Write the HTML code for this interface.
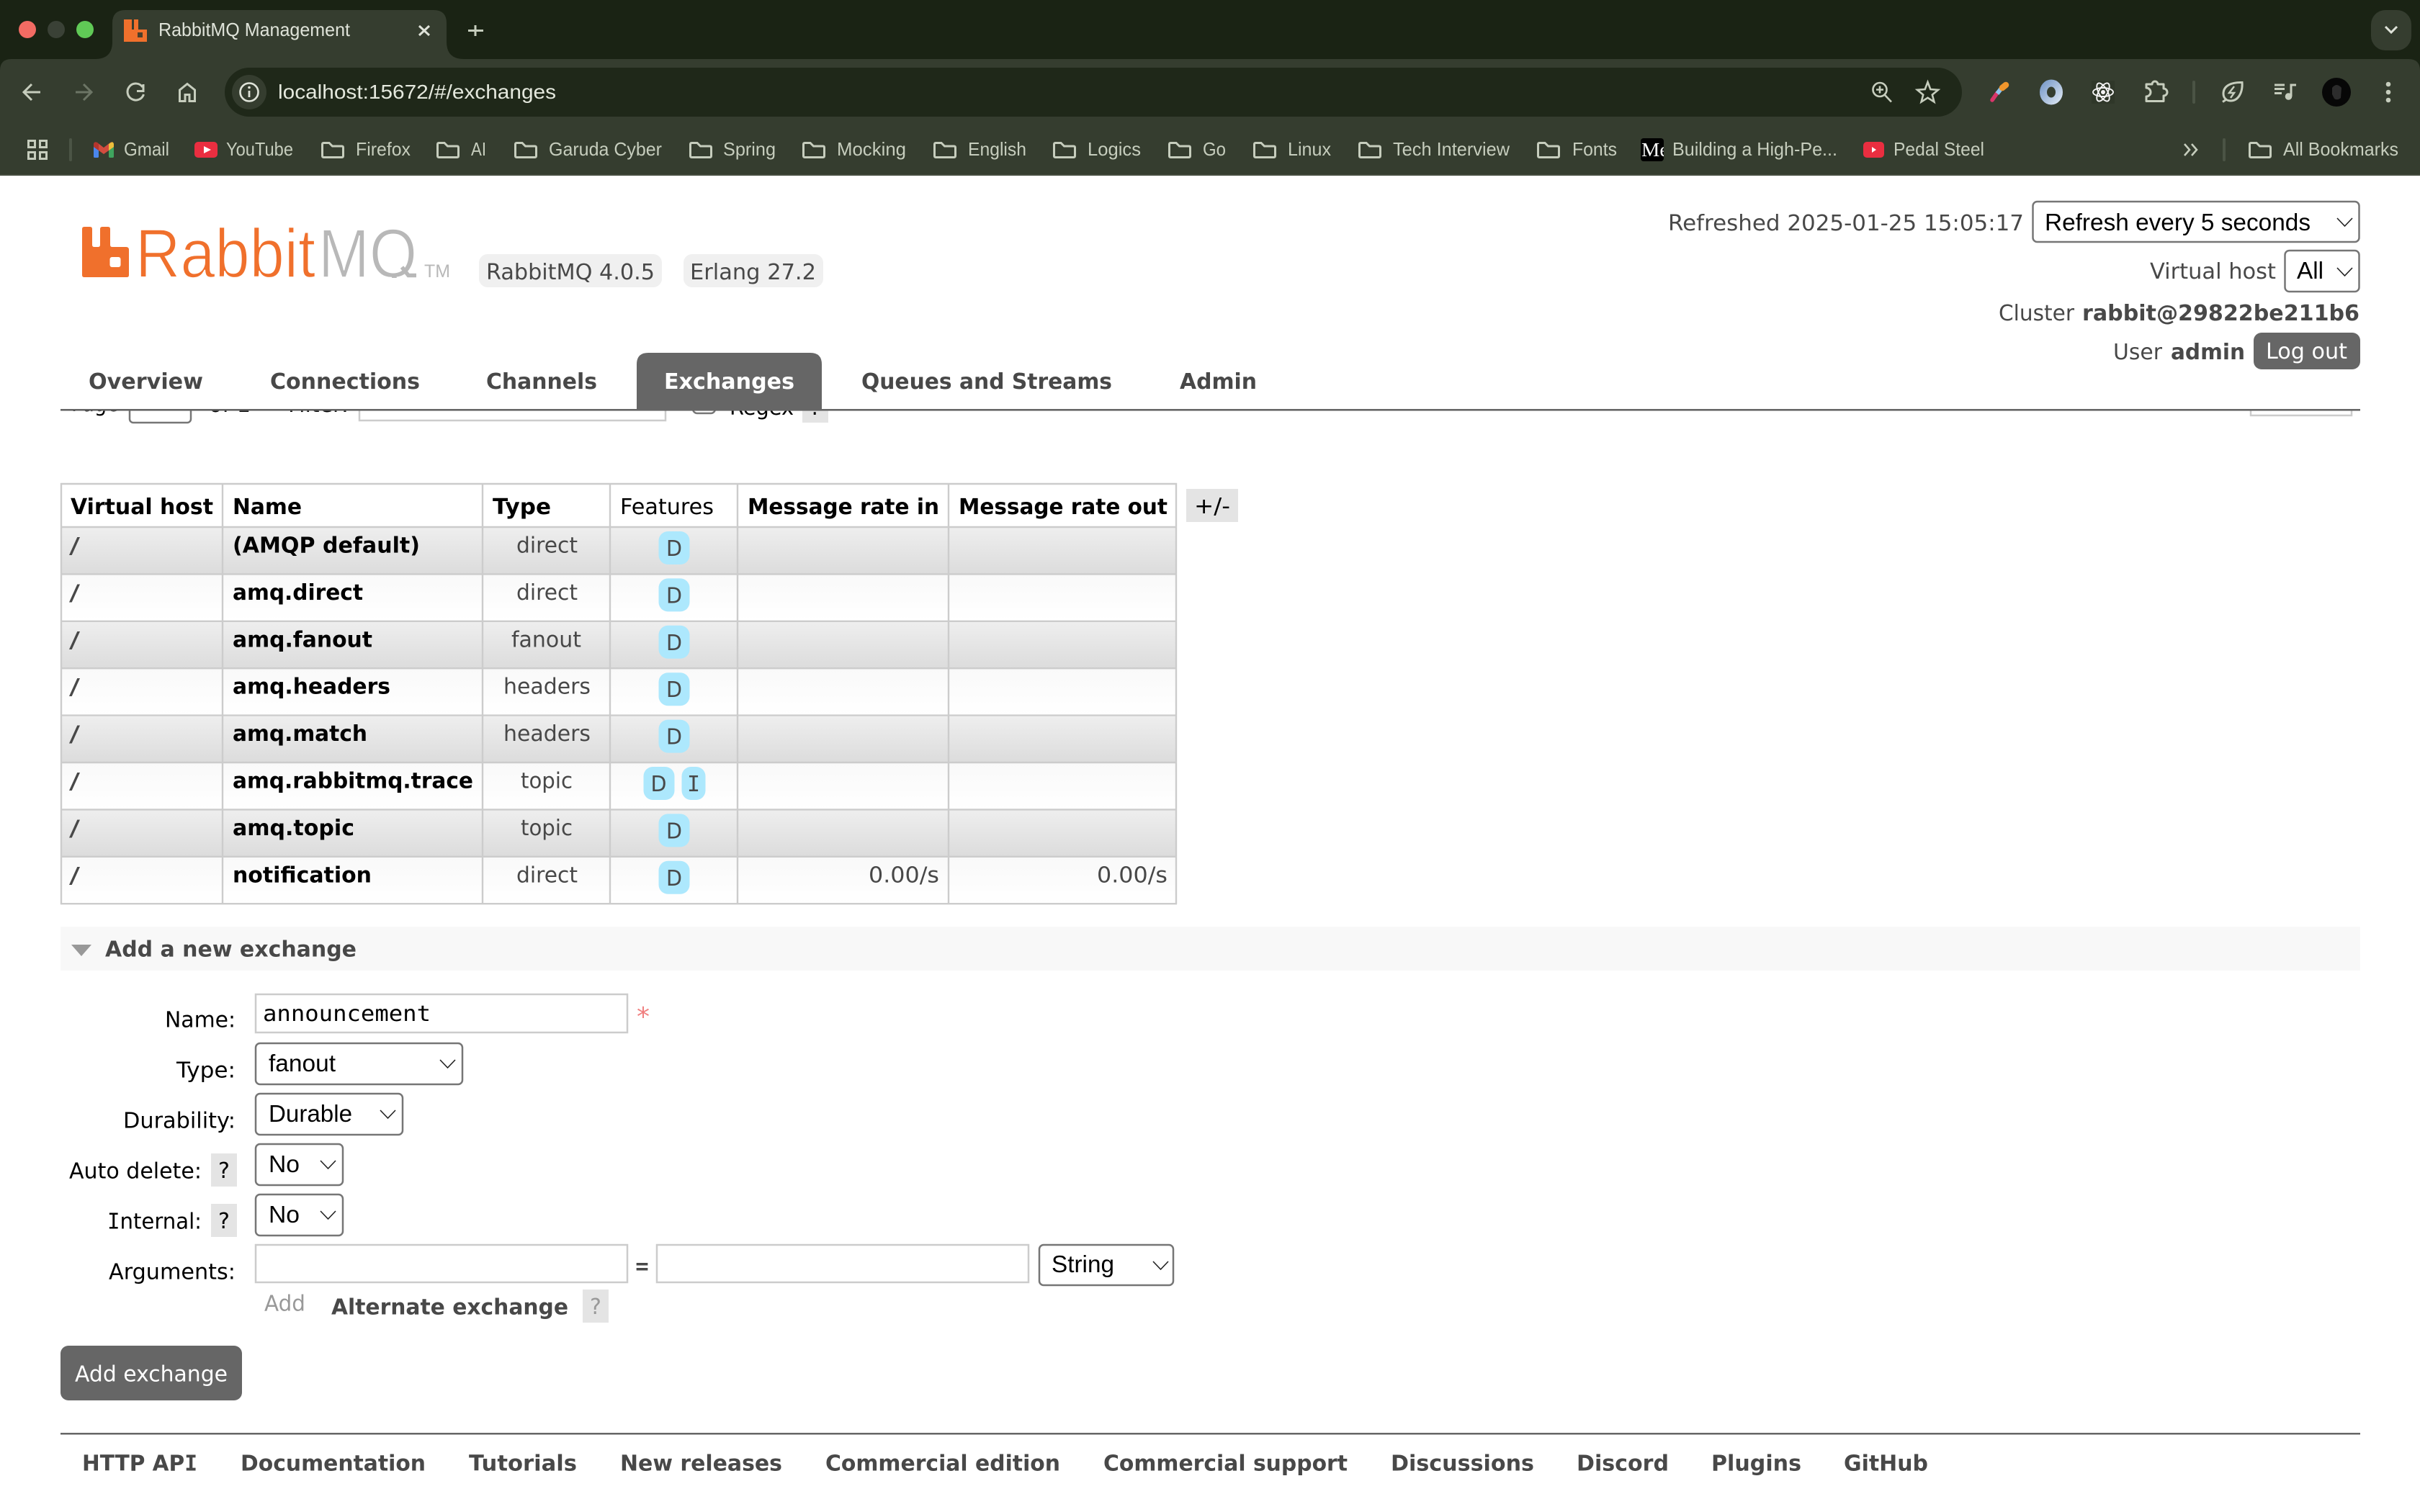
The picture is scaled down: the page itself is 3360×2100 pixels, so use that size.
<!DOCTYPE html>
<html lang="en"><head><meta charset="utf-8"><title>RabbitMQ Management</title>
<style>
html,body{margin:0;padding:0;background:#fff;width:3360px;height:2100px;overflow:hidden}
svg{display:block}
text{white-space:pre}
.d{font-family:"DejaVu Sans",sans-serif;font-size:30px;fill:#484848}
.b{font-weight:700}
.k{fill:#000}
.w{fill:#fff}
.m{font-family:"DejaVu Sans Mono",monospace}
.l{font-family:"Liberation Sans",sans-serif;font-size:33px;fill:#000}
.t{font-family:"Liberation Sans",sans-serif;font-size:26px;fill:#c6cdbd}
.i{fill:none;stroke:#c6cdbd;stroke-width:3}
.sel{fill:#fff;stroke:#767676;stroke-width:2.5}
.inp{fill:#fff;stroke:#ccc;stroke-width:2.5}
.ch{fill:none;stroke:#222;stroke-width:1.6}
.q{fill:#e4e4e4}
.bd{fill:#ade8fd}
.tl{stroke:#ccc;stroke-width:2.4}
</style></head><body>
<svg xmlns="http://www.w3.org/2000/svg" width="3360" height="2100" viewBox="0 0 3360 2100">
<defs>
<linearGradient id="g1" x1="0" y1="0" x2="0" y2="1"><stop offset="0" stop-color="#eeeeee"/><stop offset="1" stop-color="#dcdcdc"/></linearGradient>
<linearGradient id="g2" x1="0" y1="0" x2="0" y2="1"><stop offset="0" stop-color="#f9f9f9"/><stop offset="1" stop-color="#ffffff"/></linearGradient>
<linearGradient id="rg" x1="0" y1="0" x2="1" y2="1"><stop offset="0" stop-color="#7f9fcc"/><stop offset="1" stop-color="#d3dfee"/></linearGradient>
<clipPath id="below"><rect x="0" y="570" width="3360" height="40"/></clipPath>
<clipPath id="med"><rect x="2278" y="192" width="32" height="32" rx="4"/></clipPath>
<clipPath id="logo"><rect x="180" y="300" width="410" height="86"/></clipPath>
<path id="folder" d="M1.5 3.5 Q1.5 1.5 3.5 1.5 H11 L15.5 6 H28.5 Q30.5 6 30.5 8 V19.5 Q30.5 21.5 28.5 21.5 H3.5 Q1.5 21.5 1.5 19.5 Z" fill="none" stroke="#c6cdbd" stroke-width="3"/>
<path id="chev" d="M0 0 L10.5 11 L21 0" class="ch"/>
</defs>

<!-- browser chrome -->
<rect x="0" y="0" width="3360" height="244" fill="#1a2314"/>
<path d="M0 244 V98 Q0 82 16 82 H3344 Q3360 82 3360 98 V244 Z" fill="#353d2f"/>
<rect x="0" y="242" width="3360" height="2" fill="#454c3f"/>
<path d="M132 82 Q156 82 156 58 V32 Q156 14 174 14 H602 Q620 14 620 32 V58 Q620 82 644 82 Z" fill="#353d2f"/>
<circle cx="38" cy="41" r="12" fill="#f26b63"/><circle cx="78" cy="41" r="12" fill="#3a4136"/><circle cx="118" cy="41" r="12" fill="#60c956"/>
<path d="M172 27 H183 V41 H186 V27 H192 V41 H204 V58 H172 Z" fill="#f0702c"/><rect x="191" y="45" width="7" height="7" fill="#4b3f2c"/>
<text x="220" y="50" class="t" style="font-size:26px;fill:#dfe3d9" textLength="266" lengthAdjust="spacingAndGlyphs">RabbitMQ Management</text>
<path d="M582 36 L596 49 M596 36 L582 49" stroke="#dfe3d9" stroke-width="3" fill="none"/>
<path d="M660 35 V50 M650 42.5 H671" stroke="#c6cdbd" stroke-width="3" fill="none"/>
<rect x="3292" y="14" width="56" height="56" rx="20" fill="#353d2f"/>
<path d="M3312 37 L3320 45 L3328 37" fill="none" stroke="#dfe3d9" stroke-width="3"/>

<rect x="312" y="94" width="2412" height="68" rx="34" fill="#1f2819"/>
<path d="M56 128 H34 M44 117 L33 128 L44 139" class="i"/>
<path d="M127 128 H105 M116 117 L127 128 L116 139" class="i" style="stroke:#6c7565"/>
<path d="M198 121 A11.5 11.5 0 1 0 199.5 131" class="i"/><path d="M199 117 V126.5 H190" class="i"/>
<path d="M260 116.5 L249.5 125 V140.5 H257 V131.5 H263 V140.5 H270.5 V125 Z" class="i"/>
<circle cx="346" cy="128" r="24" fill="#353d2f"/><circle cx="346" cy="128" r="12.5" fill="none" stroke="#dfe3d9" stroke-width="2.6"/>
<path d="M346 126 V135" stroke="#dfe3d9" stroke-width="2.8"/><circle cx="346" cy="121.5" r="1.8" fill="#dfe3d9"/>
<text x="386" y="137" class="t" style="font-size:28px;fill:#e4e8dd" textLength="386" lengthAdjust="spacingAndGlyphs">localhost:15672/#/exchanges</text>

<circle cx="2610" cy="124.5" r="9.5" class="i" style="stroke-width:2.6"/><path d="M2617 132 L2626 141.5 M2610 119.5 V129.5 M2605 124.5 H2615" class="i" style="stroke-width:2.6"/>
<path d="M2676.5 114 L2680.3 124 L2691 124.8 L2682.8 131.6 L2685.4 141.5 L2676.5 135.8 L2667.6 141.5 L2670.2 131.6 L2662 124.8 L2672.7 124 Z" class="i" style="stroke-width:2.6"/>

<path d="M2766 139 L2773 129" stroke="#d8356a" stroke-width="5.5" stroke-linecap="round"/>
<path d="M2773 130 L2780 121" stroke="#8cc4f0" stroke-width="6"/>
<path d="M2780 122 L2785 118" stroke="#f0962c" stroke-width="8.5" stroke-linecap="round"/>
<ellipse cx="2848" cy="128" rx="11" ry="12.5" fill="none" stroke="url(#rg)" stroke-width="10"/>
<rect x="2904" y="112" width="32" height="32" fill="#2f3729"/>
<g fill="none" stroke="#f4f4f4" stroke-width="1.9"><ellipse cx="2920" cy="128" rx="14" ry="6"/><ellipse cx="2920" cy="128" rx="14" ry="6" transform="rotate(60 2920 128)"/><ellipse cx="2920" cy="128" rx="14" ry="6" transform="rotate(120 2920 128)"/></g><circle cx="2920" cy="128" r="3" fill="#f4f4f4"/>
<path d="M2980 117 H2988 A4 4 0 0 1 2996 117 H3004 V123 A5 5 0 0 1 3004 133 V140.5 H2980 V134 A6 6 0 0 0 2980 122 Z" class="i" style="stroke-linejoin:round"/>
<rect x="3044" y="112" width="4" height="32" rx="2" fill="#4b5445"/>
<path d="M3113 114.5 C3100 114 3087 118 3087 130 C3087 136 3091 140 3097 140 C3108 140 3114 128 3113 114.5 Z M3086 141.5 L3092 137.5" class="i"/><path d="M3102 120 L3095 129 H3102 L3097 136" class="i" style="stroke-width:2.4"/>
<path d="M3158 118 H3172 M3158 123.5 H3172 M3158 129.5 H3168" class="i"/><path d="M3181 134 V118 H3188" class="i"/><circle cx="3177.5" cy="134" r="4.8" fill="#c6cdbd"/>
<circle cx="3244" cy="128" r="20" fill="#070707"/><path d="M3238 122 Q3244 114 3251 122 L3250 136 Q3245 140 3241 137 L3238 131 Z" fill="#2c2c2c"/>
<circle cx="3316" cy="117" r="3.3" fill="#c6cdbd"/><circle cx="3316" cy="128" r="3.3" fill="#c6cdbd"/><circle cx="3316" cy="139" r="3.3" fill="#c6cdbd"/>

<!-- bookmarks -->
<g class="i"><rect x="39.5" y="195.5" width="9" height="9"/><rect x="55.5" y="195.5" width="9" height="9"/><rect x="39.5" y="211.5" width="9" height="9"/><rect x="55.5" y="211.5" width="9" height="9"/></g>
<rect x="96" y="192" width="4" height="32" rx="2" fill="#4b5445"/>
<rect x="130" y="201" width="7" height="18" rx="1.5" fill="#4a87ec"/><rect x="151" y="201" width="7" height="18" rx="1.5" fill="#3fa45e"/>
<path d="M130 200 Q131 196 135 198 L144 205 L153 198 Q157 196 158 200 V204 L144 214 L130 204 Z" fill="#d24c3f"/>
<path d="M151 200 L154 198 Q157 196 158 200 V204 L151 209 Z" fill="#edbf3c"/>
<path d="M130 204 V200 Q131 196 135 198 L137 199.5 V209 Z" fill="#b5352d"/>
<text x="172" y="216" class="t" textLength="63" lengthAdjust="spacingAndGlyphs">Gmail</text>
<rect x="270" y="197" width="32" height="22" rx="5" fill="#ea2e40"/><path d="M283 203 L293 208 L283 213 Z" fill="#fff"/>
<text x="314" y="216" class="t" textLength="93" lengthAdjust="spacingAndGlyphs">YouTube</text>
<use href="#folder" x="446" y="197"/><text x="494" y="216" class="t" textLength="76" lengthAdjust="spacingAndGlyphs">Firefox</text>
<use href="#folder" x="606" y="197"/><text x="654" y="216" class="t" textLength="21" lengthAdjust="spacingAndGlyphs">AI</text>
<use href="#folder" x="714" y="197"/><text x="762" y="216" class="t" textLength="157" lengthAdjust="spacingAndGlyphs">Garuda Cyber</text>
<use href="#folder" x="957" y="197"/><text x="1004" y="216" class="t" textLength="73" lengthAdjust="spacingAndGlyphs">Spring</text>
<use href="#folder" x="1114" y="197"/><text x="1162" y="216" class="t" textLength="96" lengthAdjust="spacingAndGlyphs">Mocking</text>
<use href="#folder" x="1296" y="197"/><text x="1344" y="216" class="t" textLength="81" lengthAdjust="spacingAndGlyphs">English</text>
<use href="#folder" x="1462" y="197"/><text x="1510" y="216" class="t" textLength="74" lengthAdjust="spacingAndGlyphs">Logics</text>
<use href="#folder" x="1622" y="197"/><text x="1670" y="216" class="t" textLength="32" lengthAdjust="spacingAndGlyphs">Go</text>
<use href="#folder" x="1740" y="197"/><text x="1788" y="216" class="t" textLength="60" lengthAdjust="spacingAndGlyphs">Linux</text>
<use href="#folder" x="1886" y="197"/><text x="1934" y="216" class="t" textLength="162" lengthAdjust="spacingAndGlyphs">Tech Interview</text>
<use href="#folder" x="2134" y="197"/><text x="2183" y="216" class="t" textLength="62" lengthAdjust="spacingAndGlyphs">Fonts</text>
<rect x="2278" y="192" width="32" height="32" rx="4" fill="#000"/>
<text x="2279" y="217" clip-path="url(#med)" style="font-family:'Liberation Serif',serif;font-size:27px;fill:#fff" textLength="38" lengthAdjust="spacingAndGlyphs">Me</text>
<text x="2322" y="216" class="t" textLength="229" lengthAdjust="spacingAndGlyphs">Building a High-Pe...</text>
<rect x="2587" y="197" width="29" height="22" rx="5" fill="#ea2e40"/><path d="M2599 204 L2605 208 L2599 212 Z" fill="#fff"/>
<text x="2629" y="216" class="t" textLength="126" lengthAdjust="spacingAndGlyphs">Pedal Steel</text>
<path d="M3033 200 L3040 208 L3033 216 M3043 200 L3050 208 L3043 216" class="i" style="stroke-width:2.6"/>
<rect x="3086" y="192" width="4" height="32" rx="2" fill="#4b5445"/>
<use href="#folder" x="3122" y="197"/><text x="3170" y="216" class="t" textLength="160" lengthAdjust="spacingAndGlyphs">All Bookmarks</text>

<!-- page -->
<rect x="0" y="244" width="3360" height="1856" fill="#fff"/>

<!-- logo -->
<path d="M114 318 Q114 315 117 315 H125 Q128 315 128 318 V340 Q128 343 131 343 H136 Q139 343 139 340 V318 Q139 315 142 315 H150 Q153 315 153 318 V340 Q153 343 156 343 H175 Q179 343 179 347 V382 Q179 385 176 385 H117 Q114 385 114 382 Z" fill="#f0702c"/>
<rect x="152.5" y="357" width="15" height="14" rx="3" fill="#fff"/>
<g clip-path="url(#logo)">
<text x="188" y="385" style="font-family:'Liberation Sans',sans-serif;font-size:96px;fill:#f0702c;stroke:#fff;stroke-width:1.6" textLength="250" lengthAdjust="spacingAndGlyphs">Rabbit</text>
<text x="442" y="385" style="font-family:'Liberation Sans',sans-serif;font-size:96px;fill:#b8b8b8;stroke:#fff;stroke-width:1.6" textLength="137" lengthAdjust="spacingAndGlyphs">MQ</text>
</g>
<path d="M558 371 L567 382.5 H578" fill="none" stroke="#b8b8b8" stroke-width="5.5"/>
<text x="589" y="385" style="font-family:'Liberation Sans',sans-serif;font-size:25px;fill:#b8b8b8" textLength="36" lengthAdjust="spacingAndGlyphs">TM</text>

<rect x="665" y="353" width="254" height="46" rx="12" fill="#f0f0f0"/>
<text x="675" y="388" class="d" textLength="234" lengthAdjust="spacingAndGlyphs">RabbitMQ 4.0.5</text>
<rect x="949" y="353" width="194" height="46" rx="12" fill="#f0f0f0"/>
<text x="958" y="388" class="d" textLength="175" lengthAdjust="spacingAndGlyphs">Erlang 27.2</text>

<!-- clipped content under nav -->
<g clip-path="url(#below)">
<text x="99" y="571" class="d k" textLength="66" lengthAdjust="spacingAndGlyphs">Page</text>
<rect x="180" y="540" width="85" height="47" rx="5" class="sel"/>
<text x="290" y="572" class="d k" textLength="58" lengthAdjust="spacingAndGlyphs">of 1</text>
<text x="400" y="572" class="d k" textLength="84" lengthAdjust="spacingAndGlyphs">Filter:</text>
<rect x="499" y="530" width="425" height="54" class="inp"/>
<rect x="962" y="540" width="31" height="34" rx="6" class="sel"/>
<text x="1013" y="576" class="d k" textLength="89" lengthAdjust="spacingAndGlyphs">Regex</text>
<rect x="1114" y="540" width="36" height="47" class="q"/>
<text x="1132" y="576" class="d k" text-anchor="middle">?</text>
<rect x="3125" y="530" width="140" height="47" class="inp"/>
</g>

<!-- nav -->
<path d="M884 569 V506 Q884 490 900 490 H1125 Q1141 490 1141 506 V569 Z" fill="#666"/>
<rect x="84" y="568" width="3193" height="2.6" fill="#666"/>
<text x="123" y="540" class="d b" textLength="159" lengthAdjust="spacingAndGlyphs">Overview</text>
<text x="375" y="540" class="d b" textLength="208" lengthAdjust="spacingAndGlyphs">Connections</text>
<text x="675" y="540" class="d b" textLength="154" lengthAdjust="spacingAndGlyphs">Channels</text>
<text x="922" y="540" class="d b w" textLength="181" lengthAdjust="spacingAndGlyphs">Exchanges</text>
<text x="1196" y="540" class="d b" textLength="348" lengthAdjust="spacingAndGlyphs">Queues and Streams</text>
<text x="1638" y="540" class="d b" textLength="107" lengthAdjust="spacingAndGlyphs">Admin</text>

<!-- top right -->
<text x="2316" y="320" class="d" textLength="494" lengthAdjust="spacingAndGlyphs">Refreshed 2025-01-25 15:05:17</text>
<rect x="2822.5" y="280" width="453" height="56" rx="6" class="sel"/>
<text x="2839" y="320" class="l" textLength="369" lengthAdjust="spacingAndGlyphs">Refresh every 5 seconds</text>
<use href="#chev" x="3245" y="303"/>
<text x="2985" y="387" class="d" textLength="175" lengthAdjust="spacingAndGlyphs">Virtual host</text>
<rect x="3172.5" y="348" width="103" height="57" rx="6" class="sel"/>
<text x="3189" y="387" class="l" textLength="37" lengthAdjust="spacingAndGlyphs">All</text>
<use href="#chev" x="3245" y="372"/>
<text x="2775" y="445" class="d" textLength="105" lengthAdjust="spacingAndGlyphs">Cluster</text>
<text x="2891" y="445" class="d b" textLength="385" lengthAdjust="spacingAndGlyphs">rabbit@29822be211b6</text>
<text x="2934" y="499" class="d" textLength="68" lengthAdjust="spacingAndGlyphs">User</text>
<text x="3014" y="499" class="d b" textLength="103" lengthAdjust="spacingAndGlyphs">admin</text>
<rect x="3129" y="462" width="148" height="51" rx="11" fill="#666"/>
<text x="3146" y="498" class="d w" textLength="113" lengthAdjust="spacingAndGlyphs">Log out</text>

<!-- table rows -->
<rect x="85" y="733" width="1548" height="64" fill="url(#g1)"/>
<rect x="85" y="798" width="1548" height="64" fill="url(#g2)"/>
<rect x="85" y="864" width="1548" height="64" fill="url(#g1)"/>
<rect x="85" y="929" width="1548" height="64" fill="url(#g2)"/>
<rect x="85" y="995" width="1548" height="64" fill="url(#g1)"/>
<rect x="85" y="1060" width="1548" height="64" fill="url(#g2)"/>
<rect x="85" y="1125" width="1548" height="64" fill="url(#g1)"/>
<rect x="85" y="1191" width="1548" height="64" fill="url(#g2)"/>
<g class="tl">
<path d="M84 672 H1634 M84 732 H1634 M84 797.4 H1634 M84 862.8 H1634 M84 928.2 H1634 M84 993.6 H1634 M84 1059 H1634 M84 1124.4 H1634 M84 1189.8 H1634 M84 1255.2 H1634"/>
<path d="M85 671 V1256 M309 671 V1256 M670 671 V1256 M847 671 V1256 M1024 671 V1256 M1317 671 V1256 M1633 671 V1256"/>
</g>
<text x="98" y="714" class="d b k" textLength="198" lengthAdjust="spacingAndGlyphs">Virtual host</text>
<text x="323" y="714" class="d b k" textLength="96" lengthAdjust="spacingAndGlyphs">Name</text>
<text x="684" y="714" class="d b k" textLength="81" lengthAdjust="spacingAndGlyphs">Type</text>
<text x="861" y="714" class="d k" textLength="130" lengthAdjust="spacingAndGlyphs">Features</text>
<text x="1038" y="714" class="d b k" textLength="266" lengthAdjust="spacingAndGlyphs">Message rate in</text>
<text x="1331" y="714" class="d b k" textLength="290" lengthAdjust="spacingAndGlyphs">Message rate out</text>
<rect x="1647" y="679" width="72" height="46" class="q"/>
<text x="1658" y="713" class="d k" textLength="50" lengthAdjust="spacingAndGlyphs">+/-</text>

<!-- slashes -->
<text x="96" y="768" class="d" textLength="15" lengthAdjust="spacingAndGlyphs">/</text>
<text x="96" y="833.4" class="d" textLength="15" lengthAdjust="spacingAndGlyphs">/</text>
<text x="96" y="898.8" class="d" textLength="15" lengthAdjust="spacingAndGlyphs">/</text>
<text x="96" y="964.2" class="d" textLength="15" lengthAdjust="spacingAndGlyphs">/</text>
<text x="96" y="1029.6" class="d" textLength="15" lengthAdjust="spacingAndGlyphs">/</text>
<text x="96" y="1095" class="d" textLength="15" lengthAdjust="spacingAndGlyphs">/</text>
<text x="96" y="1160.4" class="d" textLength="15" lengthAdjust="spacingAndGlyphs">/</text>
<text x="96" y="1225.8" class="d" textLength="15" lengthAdjust="spacingAndGlyphs">/</text>
<!-- names -->
<text x="323" y="767.5" class="d b k" textLength="260" lengthAdjust="spacingAndGlyphs">(AMQP default)</text>
<text x="323" y="832.9" class="d b k" textLength="181" lengthAdjust="spacingAndGlyphs">amq.direct</text>
<text x="323" y="898.3" class="d b k" textLength="194" lengthAdjust="spacingAndGlyphs">amq.fanout</text>
<text x="323" y="963.7" class="d b k" textLength="219" lengthAdjust="spacingAndGlyphs">amq.headers</text>
<text x="323" y="1029.1" class="d b k" textLength="187" lengthAdjust="spacingAndGlyphs">amq.match</text>
<text x="323" y="1094.5" class="d b k" textLength="334" lengthAdjust="spacingAndGlyphs">amq.rabbitmq.trace</text>
<text x="323" y="1159.9" class="d b k" textLength="169" lengthAdjust="spacingAndGlyphs">amq.topic</text>
<text x="323" y="1225.3" class="d b k" textLength="193" lengthAdjust="spacingAndGlyphs">notification</text>
<!-- types -->
<text x="717" y="767.5" class="d" textLength="85" lengthAdjust="spacingAndGlyphs">direct</text>
<text x="717" y="832.9" class="d" textLength="85" lengthAdjust="spacingAndGlyphs">direct</text>
<text x="710" y="898.3" class="d" textLength="97" lengthAdjust="spacingAndGlyphs">fanout</text>
<text x="699" y="963.7" class="d" textLength="121" lengthAdjust="spacingAndGlyphs">headers</text>
<text x="699" y="1029.1" class="d" textLength="121" lengthAdjust="spacingAndGlyphs">headers</text>
<text x="723" y="1094.5" class="d" textLength="72" lengthAdjust="spacingAndGlyphs">topic</text>
<text x="723" y="1159.9" class="d" textLength="72" lengthAdjust="spacingAndGlyphs">topic</text>
<text x="717" y="1225.3" class="d" textLength="85" lengthAdjust="spacingAndGlyphs">direct</text>
<!-- badges -->
<g class="bd">
<rect x="914.5" y="738" width="43" height="46" rx="13"/>
<rect x="914.5" y="803.4" width="43" height="46" rx="13"/>
<rect x="914.5" y="868.8" width="43" height="46" rx="13"/>
<rect x="914.5" y="934.2" width="43" height="46" rx="13"/>
<rect x="914.5" y="999.6" width="43" height="46" rx="13"/>
<rect x="893.5" y="1065" width="43" height="46" rx="13"/>
<rect x="946.5" y="1065" width="33" height="46" rx="13"/>
<rect x="914.5" y="1130.4" width="43" height="46" rx="13"/>
<rect x="914.5" y="1195.8" width="43" height="46" rx="13"/>
</g>
<text x="925" y="772" class="d" textLength="22" lengthAdjust="spacingAndGlyphs">D</text>
<text x="925" y="837.4" class="d" textLength="22" lengthAdjust="spacingAndGlyphs">D</text>
<text x="925" y="902.8" class="d" textLength="22" lengthAdjust="spacingAndGlyphs">D</text>
<text x="925" y="968.2" class="d" textLength="22" lengthAdjust="spacingAndGlyphs">D</text>
<text x="925" y="1033.6" class="d" textLength="22" lengthAdjust="spacingAndGlyphs">D</text>
<text x="903.5" y="1099" class="d" textLength="22" lengthAdjust="spacingAndGlyphs">D</text>
<text x="963" y="1099" class="d m" text-anchor="middle">I</text>
<text x="925" y="1164.4" class="d" textLength="22" lengthAdjust="spacingAndGlyphs">D</text>
<text x="925" y="1229.8" class="d" textLength="22" lengthAdjust="spacingAndGlyphs">D</text>
<text x="1206" y="1225.3" class="d" textLength="98" lengthAdjust="spacingAndGlyphs">0.00/s</text>
<text x="1523" y="1225.3" class="d" textLength="98" lengthAdjust="spacingAndGlyphs">0.00/s</text>

<!-- add new exchange -->
<rect x="84" y="1287" width="3193" height="61" fill="#f8f8f8"/>
<path d="M99 1312 H127 L113 1328 Z" fill="#999"/>
<text x="146" y="1328.5" class="d b" textLength="349" lengthAdjust="spacingAndGlyphs">Add a new exchange</text>

<text x="229" y="1426.5" class="d k" textLength="98" lengthAdjust="spacingAndGlyphs">Name:</text>
<rect x="355" y="1381" width="516" height="53" class="inp"/>
<text x="365" y="1418" class="d m k" textLength="233" lengthAdjust="spacingAndGlyphs">announcement</text>
<text x="893" y="1424" text-anchor="middle" style="font-family:'DejaVu Sans',sans-serif;font-size:36px;fill:#f08080">*</text>

<text x="245" y="1496.5" class="d k" textLength="82" lengthAdjust="spacingAndGlyphs">Type:</text>
<rect x="355" y="1449" width="287" height="57" rx="6" class="sel"/>
<text x="373" y="1488" class="l" textLength="93" lengthAdjust="spacingAndGlyphs">fanout</text>
<use href="#chev" x="611" y="1472"/>

<text x="171" y="1566.5" class="d k" textLength="156" lengthAdjust="spacingAndGlyphs">Durability:</text>
<rect x="355" y="1519" width="204" height="57" rx="6" class="sel"/>
<text x="373" y="1558" class="l" textLength="116" lengthAdjust="spacingAndGlyphs">Durable</text>
<use href="#chev" x="528" y="1542"/>

<text x="96" y="1636.5" class="d k" textLength="184" lengthAdjust="spacingAndGlyphs">Auto delete:</text>
<rect x="293" y="1602" width="36" height="46" class="q"/>
<text x="311" y="1636" text-anchor="middle" class="d k">?</text>
<rect x="355" y="1589" width="121" height="57" rx="6" class="sel"/>
<text x="373" y="1628" class="l" textLength="43" lengthAdjust="spacingAndGlyphs">No</text>
<use href="#chev" x="445" y="1612"/>

<text x="149" y="1706.5" class="d k" textLength="131" lengthAdjust="spacingAndGlyphs"><tspan class="m">I</tspan>nternal:</text>
<rect x="293" y="1672" width="36" height="46" class="q"/>
<text x="311" y="1706" text-anchor="middle" class="d k">?</text>
<rect x="355" y="1659" width="121" height="57" rx="6" class="sel"/>
<text x="373" y="1698" class="l" textLength="43" lengthAdjust="spacingAndGlyphs">No</text>
<use href="#chev" x="445" y="1682"/>

<text x="151" y="1776.5" class="d k" textLength="176" lengthAdjust="spacingAndGlyphs">Arguments:</text>
<rect x="355" y="1729" width="516" height="52" class="inp"/>
<text x="881" y="1769" class="d b" textLength="21" lengthAdjust="spacingAndGlyphs">=</text>
<rect x="912" y="1729" width="516" height="52" class="inp"/>
<rect x="1443" y="1729" width="186" height="56" rx="6" class="sel"/>
<text x="1460" y="1767" class="l" textLength="87" lengthAdjust="spacingAndGlyphs">String</text>
<use href="#chev" x="1601" y="1752"/>

<text x="367" y="1820.5" class="d" style="fill:#999" textLength="57" lengthAdjust="spacingAndGlyphs">Add</text>
<text x="460" y="1825.5" class="d b" textLength="329" lengthAdjust="spacingAndGlyphs">Alternate exchange</text>
<rect x="809" y="1791" width="36" height="46" class="q"/>
<text x="827" y="1825" text-anchor="middle" class="d" style="fill:#999">?</text>

<rect x="84" y="1869" width="252" height="76" rx="11" fill="#666"/>
<text x="104" y="1918.5" class="d w" textLength="212" lengthAdjust="spacingAndGlyphs">Add exchange</text>

<!-- footer -->
<rect x="84" y="1990" width="3193" height="2.5" fill="#666"/>
<text x="114" y="2042.5" class="d b" textLength="160" lengthAdjust="spacingAndGlyphs">HTTP AP<tspan class="m">I</tspan></text>
<text x="334" y="2042.5" class="d b" textLength="257" lengthAdjust="spacingAndGlyphs">Documentation</text>
<text x="651" y="2042.5" class="d b" textLength="150" lengthAdjust="spacingAndGlyphs">Tutorials</text>
<text x="861" y="2042.5" class="d b" textLength="225" lengthAdjust="spacingAndGlyphs">New releases</text>
<text x="1146" y="2042.5" class="d b" textLength="326" lengthAdjust="spacingAndGlyphs">Commercial edition</text>
<text x="1532" y="2042.5" class="d b" textLength="339" lengthAdjust="spacingAndGlyphs">Commercial support</text>
<text x="1931" y="2042.5" class="d b" textLength="199" lengthAdjust="spacingAndGlyphs">Discussions</text>
<text x="2189" y="2042.5" class="d b" textLength="128" lengthAdjust="spacingAndGlyphs">Discord</text>
<text x="2376" y="2042.5" class="d b" textLength="125" lengthAdjust="spacingAndGlyphs">Plugins</text>
<text x="2560" y="2042.5" class="d b" textLength="117" lengthAdjust="spacingAndGlyphs">GitHub</text>
</svg>
</body></html>
